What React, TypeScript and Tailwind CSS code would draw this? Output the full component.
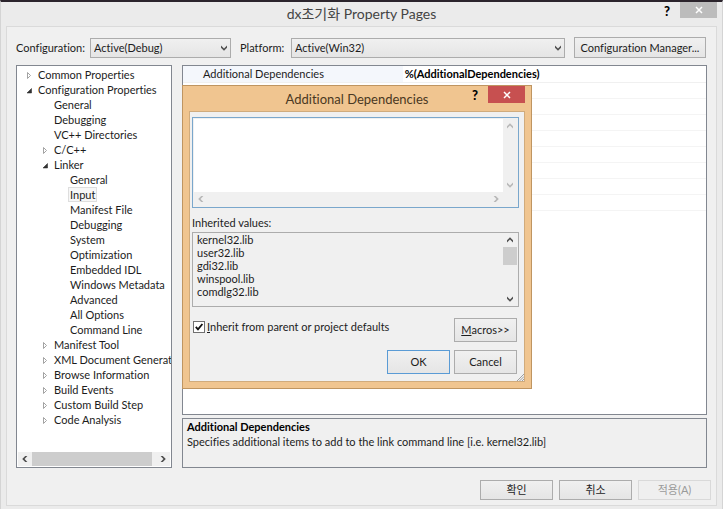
import { useState } from 'react';

import clsx from 'clsx';

interface TreeNode {
  label: string;
  level: 0 | 1 | 2;
  state?: 'open' | 'closed';
}

const TREE: TreeNode[] = [
  { label: 'Common Properties', level: 0, state: 'closed' },
  { label: 'Configuration Properties', level: 0, state: 'open' },
  { label: 'General', level: 1 },
  { label: 'Debugging', level: 1 },
  { label: 'VC++ Directories', level: 1 },
  { label: 'C/C++', level: 1, state: 'closed' },
  { label: 'Linker', level: 1, state: 'open' },
  { label: 'General', level: 2 },
  { label: 'Input', level: 2 },
  { label: 'Manifest File', level: 2 },
  { label: 'Debugging', level: 2 },
  { label: 'System', level: 2 },
  { label: 'Optimization', level: 2 },
  { label: 'Embedded IDL', level: 2 },
  { label: 'Windows Metadata', level: 2 },
  { label: 'Advanced', level: 2 },
  { label: 'All Options', level: 2 },
  { label: 'Command Line', level: 2 },
  { label: 'Manifest Tool', level: 1, state: 'closed' },
  { label: 'XML Document Generator', level: 1, state: 'closed' },
  { label: 'Browse Information', level: 1, state: 'closed' },
  { label: 'Build Events', level: 1, state: 'closed' },
  { label: 'Custom Build Step', level: 1, state: 'closed' },
  { label: 'Code Analysis', level: 1, state: 'closed' },
];

const LIBS = ['kernel32.lib', 'user32.lib', 'gdi32.lib', 'winspool.lib', 'comdlg32.lib'];

const INDENT = ['pl-2', 'pl-6', 'pl-10'];

const ROTATE = { up: 'rotate-180', down: '', left: 'rotate-90', right: '-rotate-90' };

function Chevron({ dir, className }: { dir: keyof typeof ROTATE; className?: string }) {
  return (
    <svg viewBox="0 0 8 8" className={clsx('size-2 shrink-0', ROTATE[dir], className)} aria-hidden="true">
      <path d="M1 1.6 4 4.4 7 1.6V3.8L4 6.8 1 3.8Z" fill="currentColor" />
    </svg>
  );
}

function ScrollArrow({ dir, disabled }: { dir: keyof typeof ROTATE; disabled?: boolean }) {
  return (
    <button
      type="button"
      aria-label={`Scroll ${dir}`}
      disabled={disabled}
      className={clsx('flex size-[14px] shrink-0 items-center justify-center', disabled ? 'text-[#b8b8b8]' : 'text-[#505050]')}
    >
      <Chevron dir={dir} />
    </button>
  );
}

function CloseIcon() {
  return (
    <svg viewBox="0 0 8 8" className="size-2" aria-hidden="true">
      <path d="M1 1 7 7M7 1 1 7" stroke="white" strokeWidth="1.5" />
    </svg>
  );
}

function Expander({ state }: { state?: 'open' | 'closed' }) {
  return (
    <svg viewBox="0 0 8 8" className="size-2 shrink-0" aria-hidden="true">
      {state === 'open' && <path d="M6.5 2.5V7H2Z" fill="#333" stroke="#222" strokeWidth="0.5" />}
      {state === 'closed' && <path d="M2.5 1.5 5.5 4.5 2.5 7.5Z" fill="white" stroke="#999" strokeWidth="0.9" />}
    </svg>
  );
}

interface ComboProps {
  id: string;
  value: string;
  className?: string;
}

function Combo({ id, value, className }: ComboProps) {
  return (
    <div className={clsx('relative h-5', className)}>
      <select
        id={id}
        className="block h-full w-full appearance-none border border-[#acacac] bg-linear-to-b from-[#f0f0f0] to-[#e5e5e5] pl-[3px]"
      >
        <option>{value}</option>
      </select>
      <Chevron dir="down" className="pointer-events-none absolute top-1.5 right-[3px] text-[#505050]" />
    </div>
  );
}

interface PushButtonProps {
  children: React.ReactNode;
  className?: string;
  disabled?: boolean;
}

function PushButton({ children, className, disabled }: PushButtonProps) {
  return (
    <button
      type="button"
      disabled={disabled}
      className={clsx(
        'flex items-center justify-center border',
        disabled ? 'border-[#d9d9d9] bg-[#efefef] text-[#9a9a9a]' : 'bg-linear-to-b from-[#f0f0f0] to-[#e5e5e5]',
        className,
      )}
    >
      {children}
    </button>
  );
}

function PropertyTree() {
  const [selected, setSelected] = useState(8);

  return (
    <nav className="flex w-[156px] shrink-0 flex-col border border-[#828790] bg-white pt-px">
      <ul role="tree" className="flex-1 overflow-hidden">
        {TREE.map((node, index) => (
          <li
            key={index}
            role="treeitem"
            aria-selected={index === selected}
            onClick={() => setSelected(index)}
            className={clsx('flex h-[15px] items-center gap-[3px] whitespace-nowrap', INDENT[node.level])}
          >
            <Expander state={node.state} />
            <span
              className={clsx(
                'border px-px leading-[13px]',
                index === selected ? 'border-[#dedede] bg-[#f7f7f7]' : 'border-transparent',
              )}
            >
              {node.label}
            </span>
          </li>
        ))}
      </ul>
      <div className="mx-px mb-px flex h-[14px] items-center bg-[#f0f0f0]">
        <ScrollArrow dir="left" />
        <div className="mr-1 h-full flex-1 bg-[#cdcdcd]" />
        <ScrollArrow dir="right" />
      </div>
    </nav>
  );
}

function PropertyGrid() {
  return (
    <div className="flex-1 border border-[#828790] bg-white">
      <table className="w-full table-fixed border-collapse">
        <tbody>
          <tr className="h-4 border-b border-[#f0f0f0]">
            <th scope="row" className="w-[42%] bg-[#f4f7fc] p-0 pl-5 text-left font-normal">
              Additional Dependencies
            </th>
            <td className="p-0 pl-0.5 font-bold text-black">%(AdditionalDependencies)</td>
          </tr>
          {Array.from({ length: 8 }, (_, row) => (
            <tr key={row} className="h-4 border-b border-[#f4f4f4]">
              <td />
              <td />
            </tr>
          ))}
        </tbody>
      </table>
    </div>
  );
}

function DependenciesDialog() {
  return (
    <section
      role="dialog"
      aria-label="Additional Dependencies"
      className="absolute top-5 left-0 flex w-[350px] flex-col border border-[#bf9561] bg-[#f0c590] px-1.5 pb-1.5"
    >
      <header className="relative flex h-[25px] items-center justify-center">
        <h2 className="text-[13px] text-[#4a3822]">Additional Dependencies</h2>
        <div className="absolute top-0 right-0 flex items-start">
          <button type="button" className="w-4 text-left text-[13px] leading-[18px] font-black text-black">
            ?
          </button>
          <button type="button" aria-label="Close" className="flex h-[17px] w-[37px] items-center justify-center bg-[#c75050]">
            <CloseIcon />
          </button>
        </div>
      </header>

      <div className="relative flex flex-col border border-[#d0ab7c] bg-[#f0f0f0] pt-[5px] pr-[5px] pb-[7px] pl-0.5">
        <div className="flex h-[91px] flex-col border border-[#7aa7cc] bg-[#f0f0f0] p-px">
          <div className="flex flex-1">
            <textarea aria-label="Additional Dependencies" className="h-full flex-1 resize-none bg-white outline-none" />
            <div className="flex flex-col justify-between">
              <ScrollArrow dir="up" disabled />
              <ScrollArrow dir="down" disabled />
            </div>
          </div>
          <div className="flex justify-between pr-[14px]">
            <ScrollArrow dir="left" disabled />
            <ScrollArrow dir="right" disabled />
          </div>
        </div>

        <h3 className="mt-[7px] leading-4">Inherited values:</h3>
        <div className="mt-px flex h-[75px] justify-between border border-[#acacac] pr-px pl-1">
          <ul className="leading-[13px]">
            {LIBS.map((lib) => (
              <li key={lib}>{lib}</li>
            ))}
          </ul>
          <div className="flex flex-col">
            <ScrollArrow dir="up" />
            <div className="h-[18px] bg-[#cdcdcd]" />
            <div className="flex-1" />
            <ScrollArrow dir="down" />
          </div>
        </div>

        <div className="mt-[11px] flex items-start justify-between pr-0.5">
          <label className="flex items-center gap-0.5 pt-0.5 pl-px leading-[14px]">
            <span className="relative flex">
              <input
                type="checkbox"
                defaultChecked
                className="peer size-3 appearance-none border border-[#707070] bg-white"
              />
              <svg viewBox="0 0 12 12" className="pointer-events-none absolute inset-0 hidden size-3 peer-checked:block" aria-hidden="true">
                <path d="M2.8 5.8 5 8.4 9.4 3" fill="none" stroke="#111" strokeWidth="1.8" />
              </svg>
            </span>
            <span>
              <u>I</u>nherit from parent or project defaults
            </span>
          </label>
          <PushButton className="h-6 w-[63px] border-[#acacac]">
            <u>M</u>acros&gt;&gt;
          </PushButton>
        </div>

        <div className="mt-2 flex justify-end gap-1 pr-0.5">
          <PushButton className="h-6 w-[63px] border-[#5a9bd5]">OK</PushButton>
          <PushButton className="h-6 w-[63px] border-[#acacac]">Cancel</PushButton>
        </div>

        <svg viewBox="0 0 8 8" className="absolute right-0 bottom-0 size-2" aria-hidden="true">
          <path d="M1 8 8 1M3.5 8 8 3.5M6 8 8 6" stroke="#8a8a8a" strokeWidth="0.8" />
        </svg>
      </div>
    </section>
  );
}

export default function App() {
  return (
    <main className="flex min-h-screen flex-col border-x border-t-2 border-x-[#d4d4d4] border-t-[#2b242c] bg-[#ebebeb] pr-[5px] pb-[3px] pl-[5px] font-[Lato,'Noto_Sans_CJK_KR',sans-serif] text-[11px] leading-[14px] text-[#1c1c1c] [font-variant-ligatures:none]">
      <header className="relative flex h-6 items-center justify-center">
        <h1 className="text-[14px] text-[#444]">dx초기화 Property Pages</h1>
        <div className="absolute top-0 right-0 flex items-start">
          <button type="button" className="w-4 text-left text-[13px] leading-[18px] font-black text-black">
            ?
          </button>
          <button type="button" aria-label="Close" className="flex h-4 w-[37px] items-center justify-center bg-[#bcbcbc]">
            <CloseIcon />
          </button>
        </div>
      </header>

      <div className="flex flex-1 flex-col border border-[#dadada] bg-[#f0f0f0] pt-2.5 pb-[5px]">
        <div className="flex items-center pr-2.5 pl-[9px]">
          <label htmlFor="configuration" className="w-[74px]">
            Configuration:
          </label>
          <Combo id="configuration" value="Active(Debug)" className="w-[141px]" />
          <label htmlFor="platform" className="ml-[9px] w-[51px]">
            Platform:
          </label>
          <Combo id="platform" value="Active(Win32)" className="flex-1" />
          <PushButton className="ml-[9px] h-[21px] w-[132px] border-[#acacac]">Configuration Manager...</PushButton>
        </div>

        <div className="mt-[7px] flex flex-1 gap-2.5 pr-[9px] pl-[9px]">
          <PropertyTree />
          <div className="relative flex flex-1 flex-col gap-[3px]">
            <PropertyGrid />
            <div className="h-[50px] border border-[#828790] px-1 leading-[15px]">
              <h2 className="font-bold text-black">Additional Dependencies</h2>
              <p>Specifies additional items to add to the link command line [i.e. kernel32.lib]</p>
            </div>
            <DependenciesDialog />
          </div>
        </div>

        <footer className="mt-3 flex justify-end gap-1.5 pr-[5px]">
          <PushButton className="h-5 w-[73px] border-[#acacac]">확인</PushButton>
          <PushButton className="h-5 w-[73px] border-[#acacac]">취소</PushButton>
          <PushButton disabled className="h-5 w-[73px]">
            적용(A)
          </PushButton>
        </footer>
      </div>
    </main>
  );
}
